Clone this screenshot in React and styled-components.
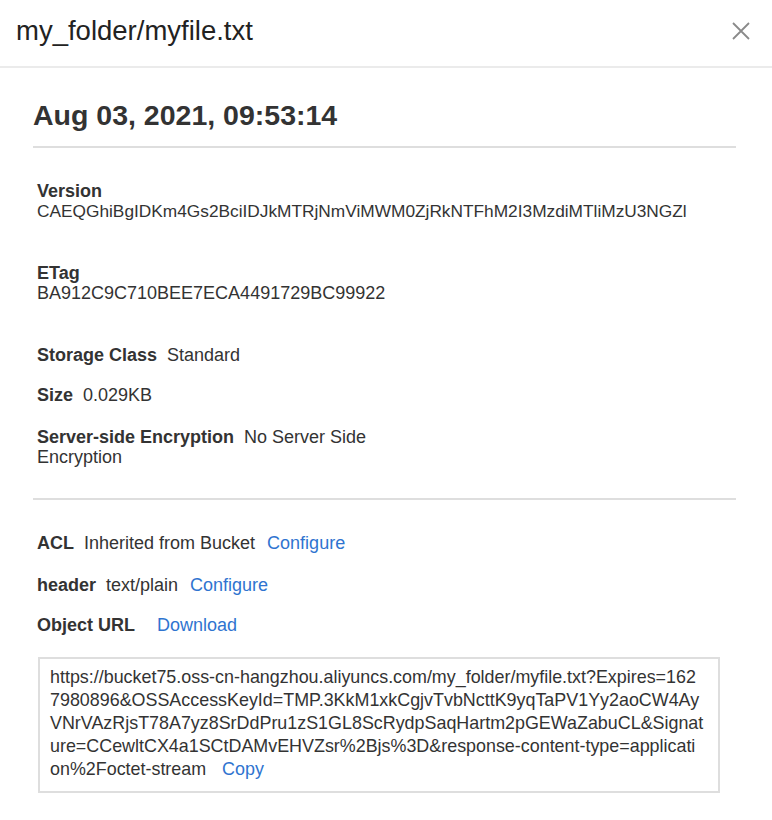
import React from 'react'
import styled, { createGlobalStyle } from 'styled-components'

const GlobalStyle = createGlobalStyle`
  body {
    margin: 0;
    background: #fff;
    font-family: 'Liberation Sans', Arial, sans-serif;
    color: #333;
  }
`

const Panel = styled.div`
  width: 772px;
  min-height: 820px;
  background: #fff;
`

const Header = styled.div`
  height: 61px;
  display: flex;
  align-items: center;
  justify-content: space-between;
  padding: 0 20px 5px 16px;
  border-bottom: 2px solid #ebebeb;
  box-sizing: content-box;
`

const Title = styled.h1`
  margin: 0;
  font-size: 27.5px;
  font-weight: 400;
  color: #222;
`

const CloseButton = styled.button`
  border: none;
  background: none;
  padding: 0;
  width: 22px;
  height: 22px;
  cursor: pointer;
  display: flex;
  svg {
    width: 22px;
    height: 22px;
  }
`

const Body = styled.div`
  padding: 0 36px 0 33px;
`

const DateTitle = styled.h2`
  margin: 27px 0 0;
  font-size: 28.5px;
  line-height: 40px;
  font-weight: 700;
  color: #333;
`

const Divider = styled.hr`
  margin: ${p => p.$top}px 0 0;
  border: none;
  border-top: 2px solid #dedede;
`

const Section = styled.div`
  padding-left: 4px;
  display: flex;
  flex-direction: column;
  margin-top: ${p => p.$top}px;
`

const Block = styled.div`
  line-height: 20px;
  margin-top: ${p => p.$top || 0}px;
`

const BlockLabel = styled.div`
  font-weight: 700;
  font-size: 18px;
`

const BlockValue = styled.div`
  font-size: ${p => p.$size || 17.3}px;
  white-space: nowrap;
`

const Row = styled.div`
  max-width: 400px;
  font-size: 18px;
  line-height: 20px;
  margin-top: ${p => p.$top || 0}px;
`

const Label = styled.span`
  font-weight: 700;
  margin-right: ${p => p.$gap || 10}px;
`

const Value = styled.span`
  margin-right: 12px;
`

const Link = styled.a`
  color: #2f74d0;
  text-decoration: none;
  cursor: pointer;
  margin-left: ${p => p.$gap || 0}px;
`

const UrlBox = styled.div`
  margin: 22px 16px 0 5px;
  border: 2px solid #dedede;
  padding: 7px 13px 10px 10px;
  font-size: 17.9px;
  line-height: 23px;
  word-break: break-all;
  color: #333;
`

const url =
  'https://bucket75.oss-cn-hangzhou.aliyuncs.com/my_folder/myfile.txt?Expires=1627980896&OSSAccessKeyId=TMP.3KkM1xkCgjvTvbNcttK9yqTaPV1Yy2aoCW4AyVNrVAzRjsT78A7yz8SrDdPru1zS1GL8ScRydpSaqHartm2pGEWaZabuCL&Signature=CCewltCX4a1SCtDAMvEHVZsr%2Bjs%3D&response-content-type=application%2Foctet-stream'

const App = () => {
  return (
    <Panel>
      <GlobalStyle />
      <Header>
        <Title>my_folder/myfile.txt</Title>
        <CloseButton aria-label='close'>
          <svg viewBox='0 0 22 22' fill='none' stroke='#8a8a8a' strokeWidth='1.8'>
            <path d='M3 3 L19 19 M19 3 L3 19' />
          </svg>
        </CloseButton>
      </Header>
      <Body>
        <DateTitle>Aug 03, 2021, 09:53:14</DateTitle>
        <Divider $top={11} />
        <Section $top={33}>
          <Block>
            <BlockLabel>Version</BlockLabel>
            <BlockValue>CAEQGhiBgIDKm4Gs2BciIDJkMTRjNmViMWM0ZjRkNTFhM2I3MzdiMTliMzU3NGZl</BlockValue>
          </Block>
          <Block $top={42}>
            <BlockLabel>ETag</BlockLabel>
            <BlockValue $size={18}>BA912C9C710BEE7ECA4491729BC99922</BlockValue>
          </Block>
        </Section>
        <Section $top={42}>
          <Row>
            <Label>Storage Class</Label>
            <Value>Standard</Value>
          </Row>
          <Row $top={20}>
            <Label>Size</Label>
            <Value>0.029KB</Value>
          </Row>
          <Row $top={22}>
            <Label>Server-side Encryption</Label>
            No Server Side Encryption
          </Row>
        </Section>
        <Divider $top={31} />
        <Section $top={33}>
          <Row>
            <Label>ACL</Label>
            <Value>Inherited from Bucket</Value>
            <Link>Configure</Link>
          </Row>
          <Row $top={22}>
            <Label>header</Label>
            <Value>text/plain</Value>
            <Link>Configure</Link>
          </Row>
          <Row $top={20}>
            <Label $gap={22}>Object URL</Label>
            <Link>Download</Link>
          </Row>
        </Section>
        <UrlBox>
          {url}
          <Link $gap={16}>Copy</Link>
        </UrlBox>
      </Body>
    </Panel>
  )
}

export default App
